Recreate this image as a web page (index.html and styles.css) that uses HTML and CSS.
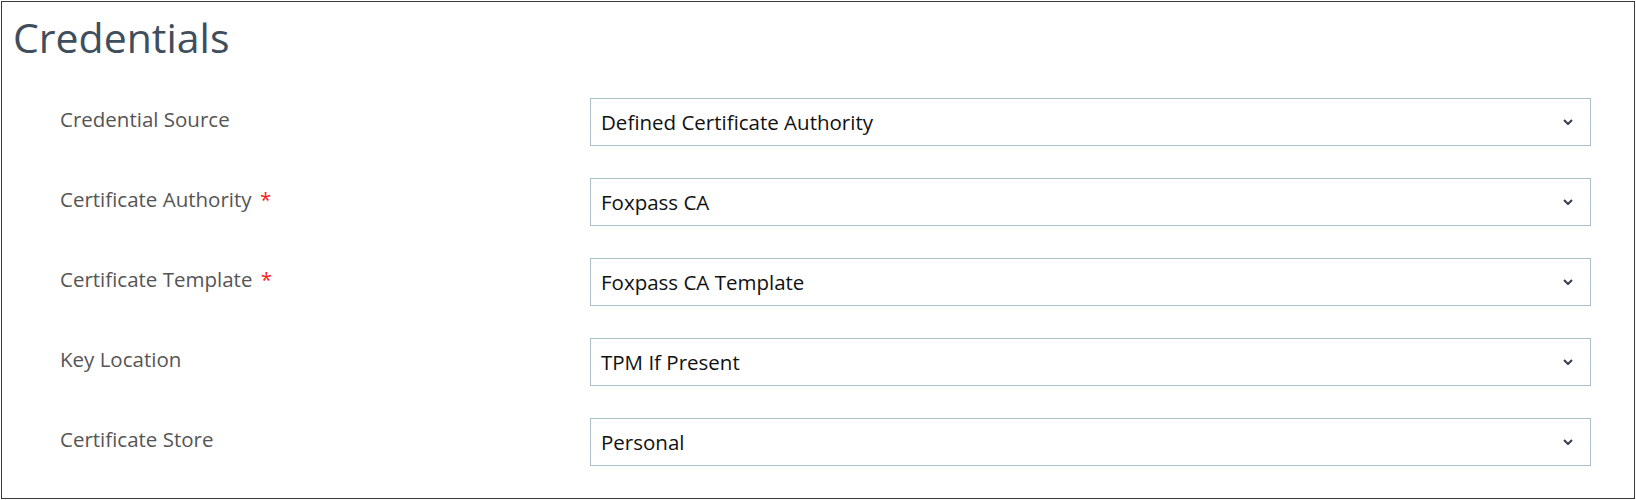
FILE: index.html
```html
<!DOCTYPE html>
<html lang="en">
<head>
<meta charset="utf-8">
<title>Credentials</title>
<link rel="stylesheet" href="styles.css">
</head>
<body>
<div class="panel">
  <h1 class="title">Credentials</h1>
  <div class="rows">
    <div class="row">
      <div class="label">Credential Source</div>
      <div class="select"><span class="value">Defined Certificate Authority</span><svg class="chev" width="10" height="6" viewBox="0 0 10 6"><polyline points="1,1 5,5 9,1" fill="none" stroke="#353f4b" stroke-width="2"/></svg></div>
    </div>
    <div class="row">
      <div class="label">Certificate Authority <span class="req">*</span></div>
      <div class="select"><span class="value">Foxpass CA</span><svg class="chev" width="10" height="6" viewBox="0 0 10 6"><polyline points="1,1 5,5 9,1" fill="none" stroke="#353f4b" stroke-width="2"/></svg></div>
    </div>
    <div class="row">
      <div class="label">Certificate Template <span class="req">*</span></div>
      <div class="select"><span class="value">Foxpass CA Template</span><svg class="chev" width="10" height="6" viewBox="0 0 10 6"><polyline points="1,1 5,5 9,1" fill="none" stroke="#353f4b" stroke-width="2"/></svg></div>
    </div>
    <div class="row">
      <div class="label">Key Location</div>
      <div class="select"><span class="value">TPM If Present</span><svg class="chev" width="10" height="6" viewBox="0 0 10 6"><polyline points="1,1 5,5 9,1" fill="none" stroke="#353f4b" stroke-width="2"/></svg></div>
    </div>
    <div class="row">
      <div class="label">Certificate Store</div>
      <div class="select"><span class="value">Personal</span><svg class="chev" width="10" height="6" viewBox="0 0 10 6"><polyline points="1,1 5,5 9,1" fill="none" stroke="#353f4b" stroke-width="2"/></svg></div>
    </div>
  </div>
</div>
</body>
</html>
```

FILE: styles.css
```css
html, body {
  margin: 0;
  padding: 0;
  background: #ffffff;
}

body {
  font-family: "Open Sans", "Liberation Sans", sans-serif;
}

.panel {
  box-sizing: border-box;
  margin: 1px;
  width: 1634px;
  height: 498px;
  border: 1px solid #3a3a3a;
  padding: 7px 43px 0 11px;
}

.title {
  margin: 0;
  font-size: 41px;
  line-height: 56px;
  font-weight: 400;
  color: #3f4e5d;
}

.rows {
  display: flex;
  flex-direction: column;
  gap: 32px;
  margin-top: 33px;
  padding-left: 47px;
}

.row {
  display: flex;
  align-items: flex-start;
  height: 48px;
}

.label {
  width: 530px;
  flex: none;
  font-size: 20.5px;
  line-height: 26px;
  padding-top: 8px;
  color: #555555;
}

.req {
  color: #ff1a1a;
  margin-left: 3px;
}

.select {
  box-sizing: border-box;
  flex: 1;
  height: 48px;
  border: 1px solid #aebfcc;
  display: flex;
  align-items: center;
  justify-content: space-between;
  padding: 0 17px 0 10px;
}

.value {
  font-size: 20.5px;
  line-height: 46px;
  color: #111111;
}

.chev {
  display: block;
  margin-top: -1px;
}
```
